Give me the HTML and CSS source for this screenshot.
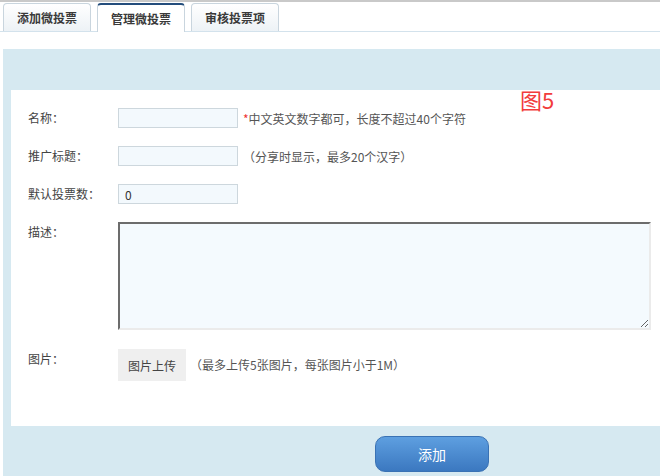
FILE: index.html
```html
<!DOCTYPE html>
<html lang="zh-CN">
<head>
    <meta charset="UTF-8">
    <meta name="viewport" content="width=device-width, initial-scale=1.0">
    <title>管理微投票</title>
    <link rel="stylesheet" href="styles.css">
</head>
<body>

<div id="topLine"></div>
<ul id="tabBar">
    <li class="tab">添加微投票</li>
    <li class="tab active">管理微投票</li>
    <li class="tab">审核投票项</li>
</ul>

<div id="mainBox">
    <div id="formPanel">
        <div class="row">
            <label class="rowLabel">名称：</label>
            <input class="textInput" type="text">
            <span class="hint"><em>*</em>中文英文数字都可，长度不超过40个字符</span>
        </div>
        <div class="row">
            <label class="rowLabel">推广标题：</label>
            <input class="textInput" type="text">
            <span class="hint">（分享时显示，最多20个汉字）</span>
        </div>
        <div class="row">
            <label class="rowLabel">默认投票数：</label>
            <input class="textInput" type="text" value="0">
        </div>
        <div class="row">
            <label class="rowLabel">描述：</label>
            <textarea class="descInput"></textarea>
        </div>
        <div class="row">
            <label class="rowLabel">图片：</label>
            <button class="uploadButton">图片上传</button>
            <span class="hint uploadHint">（最多上传5张图片，每张图片小于1M）</span>
        </div>
    </div>
    <div id="footerBar">
        <button id="addButton">添加</button>
    </div>
</div>

<div id="figureMark">图5</div>

</body>
</html>
```

FILE: styles.css
```css
body {
    margin: 0;
    font-family: "Noto Sans CJK SC", "Microsoft YaHei", sans-serif;
    font-size: 12px;
    color: #444;
    background-color: #fff;
}

#topLine {
    height: 2px;
    background-color: #c9c9c9;
}

#tabBar {
    display: flex;
    gap: 6px;
    margin: 1px 0 0 0;
    padding: 0 0 0 3px;
    list-style: none;
    border-bottom: 1px solid #d3e2ec;
}

.tab {
    width: 86px;
    height: 27px;
    line-height: 27px;
    text-align: center;
    font-weight: bold;
    color: #3a3a3a;
    border: 1px solid #c9d5de;
    border-bottom: none;
    border-radius: 4px 4px 0 0;
    background: linear-gradient(#ffffff, #edf2f6);
}

.tab.active {
    height: 26px;
    border-top: 2px solid #244d7c;
    background: #fff;
    margin-bottom: -1px;
    padding-bottom: 1px;
}

#mainBox {
    margin: 17px 0 0 3px;
    padding: 41px 0 0 8px;
    background-color: #d6e9f1;
}

#formPanel {
    background-color: #fff;
    padding: 18px 0 45px 17px;
}

.row {
    display: flex;
    align-items: center;
    margin-bottom: 18px;
}

.row:last-child {
    margin-bottom: 0;
    align-items: flex-start;
}

.row:nth-child(4) {
    align-items: flex-start;
    margin-bottom: 19px;
}

.rowLabel {
    width: 90px;
    line-height: 20px;
    color: #444;
}

.textInput {
    box-sizing: border-box;
    width: 120px;
    height: 20px;
    margin: 0;
    padding: 0 6px;
    border: 1px solid #cdd7dd;
    background-color: #f3f9fd;
    font-family: inherit;
    font-size: 12px;
    color: #333;
    outline: none;
}

.hint {
    margin-left: 5px;
    color: #555;
}

.hint em {
    font-style: normal;
    color: #e33;
}

.descInput {
    box-sizing: border-box;
    width: 533px;
    height: 108px;
    margin: 0;
    border-top: 2px solid #6c6c6c;
    border-left: 2px solid #6c6c6c;
    border-right: 2px solid #ebebeb;
    border-bottom: 2px solid #ebebeb;
    background-color: #f4fafe;
    font-family: inherit;
    font-size: 12px;
    outline: none;
}

.uploadButton {
    width: 68px;
    height: 32px;
    border: none;
    background-color: #efefef;
    font-family: inherit;
    font-size: 12px;
    color: #444;
    cursor: pointer;
}

.uploadHint {
    line-height: 32px;
    margin-left: 4px;
}

#footerBar {
    height: 51px;
    padding: 10px 0 0 364px;
    box-sizing: border-box;
}

#addButton {
    width: 114px;
    height: 36px;
    border: 1px solid #3a72b4;
    border-radius: 10px;
    background: linear-gradient(#5e9fe0, #3b78c0);
    color: #fff;
    font-family: inherit;
    font-size: 14px;
    cursor: pointer;
}

#figureMark {
    position: absolute;
    left: 520px;
    top: 83px;
    font-size: 22px;
    color: #f23c3c;
}
```
